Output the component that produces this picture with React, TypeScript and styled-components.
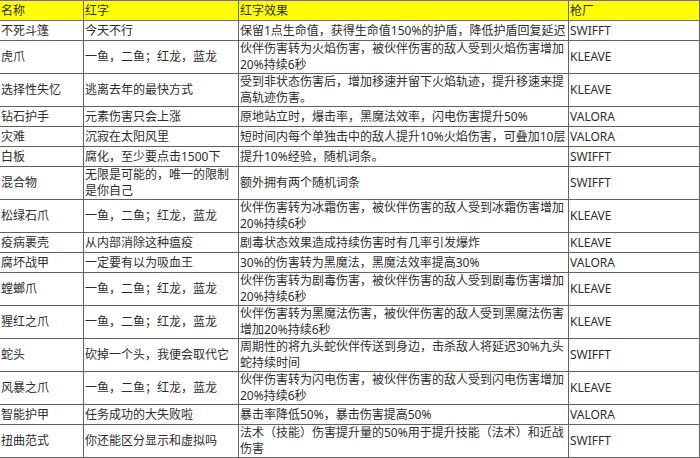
import React from "react";
import styled, { createGlobalStyle } from "styled-components";

const Global = createGlobalStyle`
  html, body { margin: 0; padding: 0; background: #ffffff; }
  body {
    font-family: "Noto Sans", "Noto Sans CJK SC", sans-serif;
    font-size: 12px;
    color: #2e2e2e;
  }
`;

const Table = styled.div`
  width: 700px;
  display: flex;
  flex-direction: column;
`;

const Row = styled.div<{ $head?: boolean }>`
  display: grid;
  grid-template-columns: 84px 155px 330px 131px;
  background: ${(p) => (p.$head ? "#ffff00" : "#ffffff")};
  border-top: ${(p) => (p.$head ? "1px solid #7466c2" : "none")};
  border-bottom: 1px solid ${(p) => (p.$head ? "#7466c2" : "#626262")};
`;

const Cell = styled.div`
  min-height: 19px;
  display: flex;
  align-items: center;
  padding-left: 1px;
  border-right: 1px solid #626262;
  line-height: 16px;
  white-space: nowrap;
  overflow: hidden;
`;

type Item = { name: string; red: string[]; effect: string[]; maker: string };

const rows: Item[] = [
  { name: "不死斗篷", red: ["今天不行"], effect: ["保留1点生命值，获得生命值150%的护盾，降低护盾回复延迟"], maker: "SWIFFT" },
  { name: "虎爪", red: ["一鱼，二鱼；红龙，蓝龙"], effect: ["伙伴伤害转为火焰伤害，被伙伴伤害的敌人受到火焰伤害增加", "20%持续6秒"], maker: "KLEAVE" },
  { name: "选择性失忆", red: ["逃离去年的最快方式"], effect: ["受到非状态伤害后，增加移速并留下火焰轨迹，提升移速来提", "高轨迹伤害。"], maker: "KLEAVE" },
  { name: "钻石护手", red: ["元素伤害只会上涨"], effect: ["原地站立时，爆击率，黑魔法效率，闪电伤害提升50%"], maker: "VALORA" },
  { name: "灾难", red: ["沉寂在太阳风里"], effect: ["短时间内每个单独击中的敌人提升10%火焰伤害，可叠加10层"], maker: "VALORA" },
  { name: "白板", red: ["腐化，至少要点击1500下"], effect: ["提升10%经验，随机词条。"], maker: "SWIFFT" },
  { name: "混合物", red: ["无限是可能的，唯一的限制", "是你自己"], effect: ["额外拥有两个随机词条"], maker: "SWIFFT" },
  { name: "松绿石爪", red: ["一鱼，二鱼；红龙，蓝龙"], effect: ["伙伴伤害转为冰霜伤害，被伙伴伤害的敌人受到冰霜伤害增加", "20%持续6秒"], maker: "KLEAVE" },
  { name: "疫病裹壳", red: ["从内部消除这种瘟疫"], effect: ["剧毒状态效果造成持续伤害时有几率引发爆炸"], maker: "KLEAVE" },
  { name: "腐坏战甲", red: ["一定要有以为吸血王"], effect: ["30%的伤害转为黑魔法，黑魔法效率提高30%"], maker: "VALORA" },
  { name: "螳螂爪", red: ["一鱼，二鱼；红龙，蓝龙"], effect: ["伙伴伤害转为剧毒伤害，被伙伴伤害的敌人受到剧毒伤害增加", "20%持续6秒"], maker: "KLEAVE" },
  { name: "猩红之爪", red: ["一鱼，二鱼；红龙，蓝龙"], effect: ["伙伴伤害转为黑魔法伤害，被伙伴伤害的敌人受到黑魔法伤害", "增加20%持续6秒"], maker: "KLEAVE" },
  { name: "蛇头", red: ["砍掉一个头，我便会取代它"], effect: ["周期性的将九头蛇伙伴传送到身边，击杀敌人将延迟30%九头", "蛇持续时间"], maker: "SWIFFT" },
  { name: "风暴之爪", red: ["一鱼，二鱼；红龙，蓝龙"], effect: ["伙伴伤害转为闪电伤害，被伙伴伤害的敌人受到闪电伤害增加", "20%持续6秒"], maker: "KLEAVE" },
  { name: "智能护甲", red: ["任务成功的大失败啦"], effect: ["暴击率降低50%，暴击伤害提高50%"], maker: "VALORA" },
  { name: "扭曲范式", red: ["你还能区分显示和虚拟吗"], effect: ["法术（技能）伤害提升量的50%用于提升技能（法术）和近战", "伤害"], maker: "SWIFFT" },
];

const Lines: React.FC<{ lines: string[] }> = ({ lines }) => (
  <span>
    {lines.map((l, i) => (
      <React.Fragment key={i}>
        {i > 0 && <br />}
        {l}
      </React.Fragment>
    ))}
  </span>
);

export default function App() {
  return (
    <>
      <Global />
      <Table>
        <Row $head>
          <Cell>名称</Cell>
          <Cell>红字</Cell>
          <Cell>红字效果</Cell>
          <Cell>枪厂</Cell>
        </Row>
        {rows.map((r) => (
          <Row key={r.name}>
            <Cell>{r.name}</Cell>
            <Cell>
              <Lines lines={r.red} />
            </Cell>
            <Cell>
              <Lines lines={r.effect} />
            </Cell>
            <Cell>{r.maker}</Cell>
          </Row>
        ))}
      </Table>
    </>
  );
}
